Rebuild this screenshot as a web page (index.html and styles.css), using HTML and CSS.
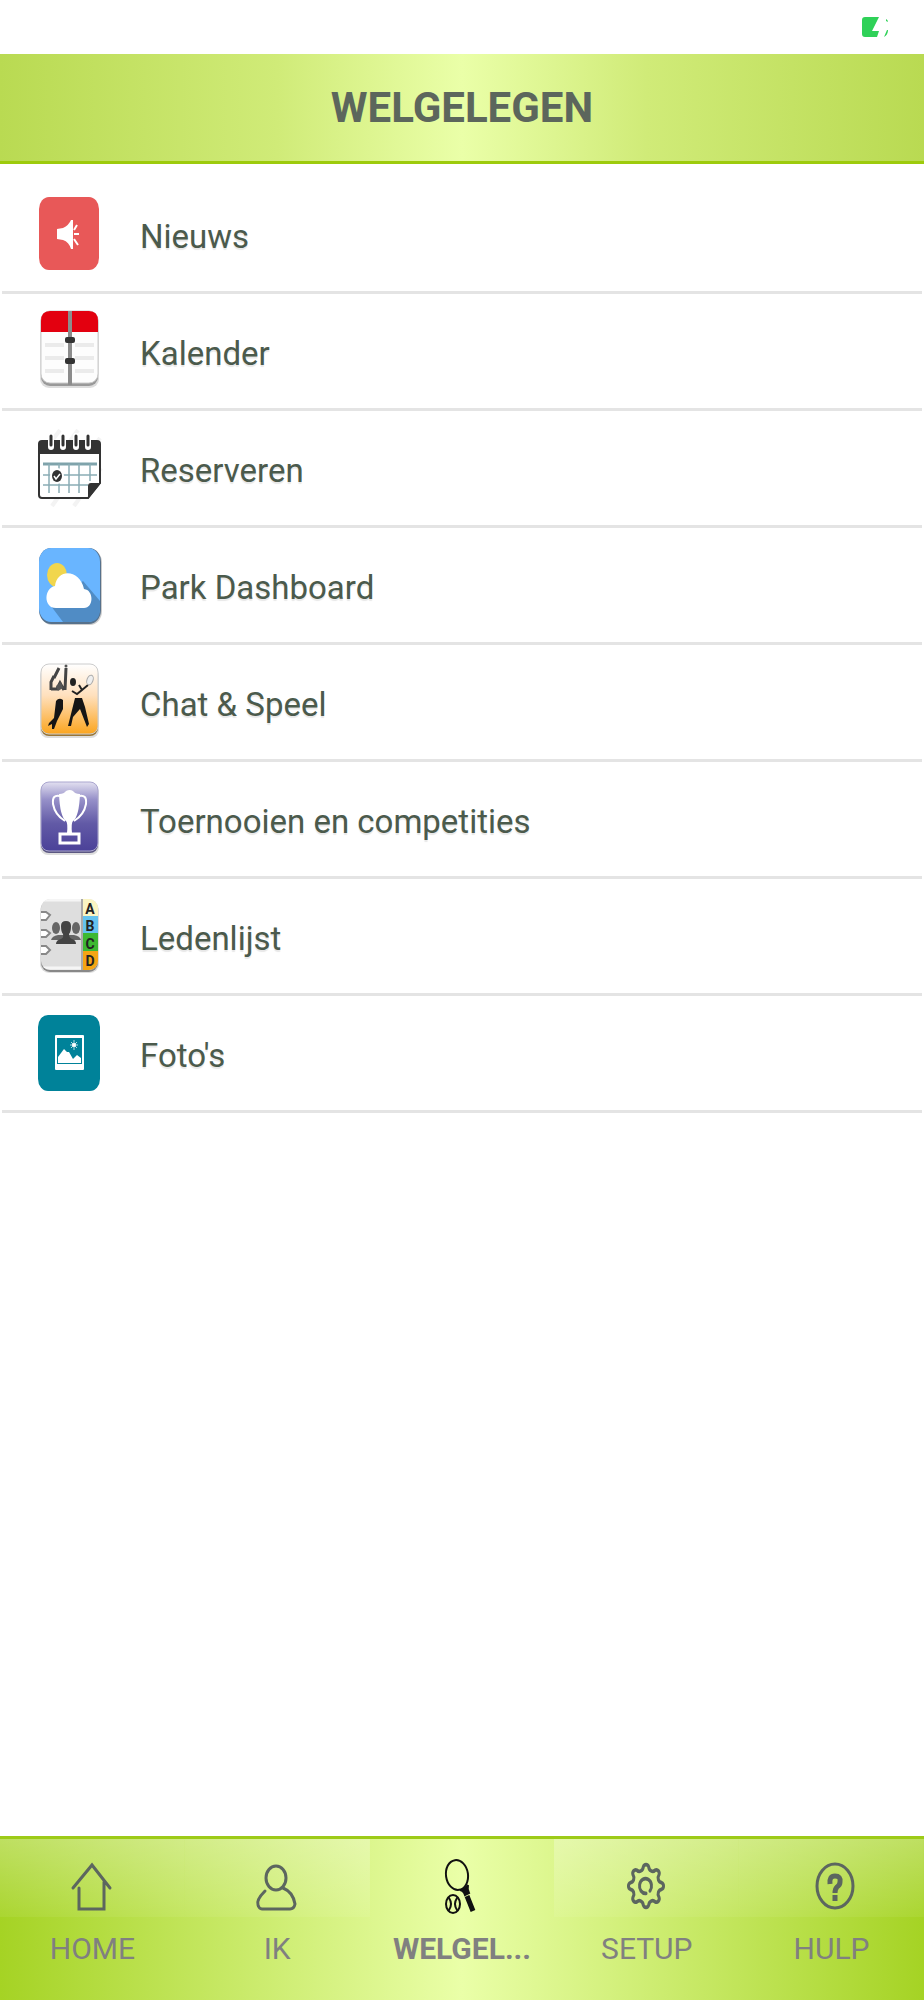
FILE: index.html
```html
<!DOCTYPE html>
<html lang="nl">
<head>
    <meta charset="UTF-8">
    <meta name="viewport" content="width=device-width, initial-scale=1.0">
    <title>Welgelegen</title>
    <link rel="stylesheet" href="styles.css">
</head>
<body>

<div class="status-bar">
    <svg class="battery" viewBox="0 0 28 22" role="img" aria-label="Batterij">
        <path d="M4 1H18L11 15H18L16 21H4Q1 21 1 18V4Q1 1 4 1Z" fill="#2fd158"/>
        <path d="M25 3Q27 4 27 6L25 5ZM26 14H27Q27 19 23 21Z" fill="#2fd158"/>
    </svg>
</div>

<header class="header">
    <h1>WELGELEGEN</h1>
</header>

<main>
    <ul class="menu">
        <li>
            <a href="#nieuws">
                <svg class="menu-icon" viewBox="0 0 72 88" aria-hidden="true">
                    <rect x="5" y="7" width="60" height="73" rx="10" ry="12" fill="#e85858"/>
                    <path d="M23 39L29 38Q35 35 37 30H39V59H37Q35 52 29 50L23 49Z" fill="#fff"/>
                    <path d="M40 40L43 35M40 44H45M40 49L44 55" stroke="#fff" stroke-width="2" fill="none"/>
                </svg>
                <span>Nieuws</span>
            </a>
        </li>
        <li>
            <a href="#kalender">
                <svg class="menu-icon" viewBox="0 0 72 88" aria-hidden="true">
                    <rect x="6" y="7" width="59" height="74" rx="9" fill="#ddd"/>
                    <rect x="7" y="5" width="57" height="74" rx="9" fill="#999"/>
                    <rect x="7" y="4" width="57" height="72" rx="9" fill="#fdfdfd" stroke="#ccc"/>
                    <path d="M7 25V14Q7 4 16 4H55Q64 4 64 14V25Z" fill="#e3000f"/>
                    <path d="M11 38H30M41 38H60M11 51H30M41 51H60M11 64H30M41 64H60" stroke="#ebebeb" stroke-width="4"/>
                    <rect x="34" y="4" width="4" height="74" fill="#8c8c8c"/>
                    <rect x="31" y="30" width="10" height="6" rx="2" fill="#333"/>
                    <rect x="31" y="51" width="10" height="6" rx="2" fill="#333"/>
                </svg>
                <span>Kalender</span>
            </a>
        </li>
        <li>
            <a href="#reserveren">
                <svg class="menu-icon" viewBox="0 0 72 88" aria-hidden="true">
                    <path d="M5 34L26 6M5 60L44 6M18 82L66 14M40 82L67 44" stroke="#f3f3f3" stroke-width="4"/>
                    <path d="M8 17H63Q66 17 66 20V59L54 74H8Q5 74 5 71V20Q5 17 8 17Z" fill="#fff" stroke="#333" stroke-width="2"/>
                    <path d="M5 30V20Q5 17 8 17H63Q66 17 66 20V30Z" fill="#333"/>
                    <path d="M17 12V23M29 12V23M42 12V23M54 12V23" stroke="#fff" stroke-width="6" stroke-linecap="round"/>
                    <path d="M17 12V21M29 12V21M42 12V21M54 12V21" stroke="#333" stroke-width="3" stroke-linecap="round"/>
                    <path d="M9 40H63" stroke="#7fa3ab" stroke-width="3"/>
                    <path d="M9 51H63M9 61H54M15 40V69M25 40V69M35 40V69M45 40V69M56 40V57" stroke="#8badb5" stroke-width="1.5" fill="none"/>
                    <ellipse cx="23" cy="52" rx="7" ry="8" fill="#fff"/>
                    <ellipse cx="23" cy="52" rx="5" ry="6" fill="#333"/>
                    <path d="M20 52L22 55L26 50" stroke="#fff" stroke-width="1.5" fill="none"/>
                    <path d="M54 75V62Q54 59 57 59H67Z" fill="#333"/>
                </svg>
                <span>Reserveren</span>
            </a>
        </li>
        <li>
            <a href="#park">
                <svg class="menu-icon" viewBox="0 0 72 88" aria-hidden="true">
                    <rect x="6" y="8" width="62" height="76" rx="12" ry="14" fill="#ccc"/>
                    <rect x="5" y="7" width="62" height="76" rx="12" ry="14" fill="#56718c"/>
                    <rect x="5" y="7" width="61" height="74" rx="12" ry="14" fill="#69b5ff"/>
                    <path d="M49 40L66 60V68Q66 81 54 81H29L17 65Z" fill="#508cc5"/>
                    <ellipse cx="23" cy="34" rx="10" ry="12" fill="#f1d64d"/>
                    <path d="M22 67C9 67 10 47 21 45C23 27 46 28 50 48C60 49 60 67 50 67Z" fill="#fff"/>
                </svg>
                <span>Park Dashboard</span>
            </a>
        </li>
        <li>
            <a href="#chat">
                <svg class="menu-icon" viewBox="0 0 72 88" aria-hidden="true">
                    <defs>
                        <linearGradient id="orange" x1="0" y1="0" x2="0" y2="1">
                            <stop offset="0" stop-color="#fff"/>
                            <stop offset=".45" stop-color="#ffe0bd"/>
                            <stop offset="1" stop-color="#fba51f"/>
                        </linearGradient>
                    </defs>
                    <rect x="6" y="10" width="59" height="70" rx="8" fill="#ddd"/>
                    <rect x="7" y="8" width="57" height="70" rx="8" fill="#997534"/>
                    <rect x="7" y="6" width="57" height="70" rx="8" fill="url(#orange)" stroke="#ccc"/>
                    <path d="M17 32L17 24L20 18M20 20L25 10M17 31H23L26 25L30 32M31 32L32 10" fill="none" stroke="#444" stroke-width="3"/>
                    <path d="M22 28L27 24L29 30L24 33Z" fill="#555"/>
                    <circle cx="32" cy="8" r="1.5" fill="#555"/>
                    <path d="M22 43Q25 39 29 42V51L25 59L23 63L20 71H18V66L14 68L15 65L20 60Z" fill="#151515"/>
                    <ellipse cx="39" cy="24" rx="3" ry="4" fill="#222"/>
                    <path d="M38 33L43 36L48 32L45 27M48 32L54 27" fill="none" stroke="#222" stroke-width="2"/>
                    <ellipse cx="56" cy="22" rx="3" ry="5" fill="#eee" stroke="#aaa" transform="rotate(20 56 22)"/>
                    <path d="M41 40H48L51 49L55 66L53 69L46 51L39 59L37 68H34L38 52Z" fill="#151515"/>
                </svg>
                <span>Chat &amp; Speel</span>
            </a>
        </li>
        <li>
            <a href="#toernooien">
                <svg class="menu-icon" viewBox="0 0 72 88" aria-hidden="true">
                    <defs>
                        <linearGradient id="purple" x1="0" y1="0" x2="0" y2="1">
                            <stop offset="0" stop-color="#e2e0f0"/>
                            <stop offset=".25" stop-color="#9791c9"/>
                            <stop offset=".6" stop-color="#625aa6"/>
                            <stop offset="1" stop-color="#4b4198"/>
                        </linearGradient>
                    </defs>
                    <rect x="6" y="10" width="59" height="70" rx="8" fill="#ddd"/>
                    <rect x="7" y="8" width="57" height="70" rx="8" fill="#5b5782"/>
                    <rect x="7" y="7" width="57" height="69" rx="8" fill="url(#purple)" stroke="#aaa6cf"/>
                    <path d="M26 21Q18 19 19 29Q21 40 31 46M45 21Q53 19 52 29Q50 40 40 46" fill="none" stroke="#fff" stroke-width="2"/>
                    <path d="M25 19Q30 19 32 16Q36 14 39 16Q41 19 46 19Q45 42 39 46Q37 48 38 58H33Q34 48 32 46Q26 42 25 19Z" fill="#fff"/>
                    <path d="M26 59H45V68H26Z" fill="none" stroke="#fff" stroke-width="3"/>
                </svg>
                <span>Toernooien en competities</span>
            </a>
        </li>
        <li>
            <a href="#ledenlijst">
                <svg class="menu-icon" viewBox="0 0 72 88" aria-hidden="true">
                    <defs>
                        <clipPath id="book"><rect x="7" y="7" width="57" height="71" rx="9"/></clipPath>
                    </defs>
                    <rect x="6" y="10" width="59" height="71" rx="9" fill="#ddd"/>
                    <rect x="7" y="8" width="57" height="72" rx="9" fill="#888"/>
                    <g clip-path="url(#book)">
                        <rect x="7" y="7" width="57" height="71" fill="#dedede"/>
                        <path d="M7 8H49M7 76H49" stroke="#f5f5f5" stroke-width="3"/>
                        <rect x="47" y="7" width="3" height="71" fill="#aaa"/>
                        <rect x="49" y="7" width="15" height="17" fill="#fbf5c3"/>
                        <rect x="49" y="24" width="15" height="17" fill="#64c3ef"/>
                        <rect x="49" y="41" width="15" height="18" fill="#3db832"/>
                        <rect x="49" y="59" width="15" height="19" fill="#f5a514"/>
                    </g>
                    <path d="M7 20H12L16 23L12 28H7M7 38H12L16 41L12 45H7M7 54H12L16 58L12 62H7" fill="#fff" stroke="#888" stroke-width="2"/>
                    <g fill="#666">
                        <ellipse cx="22" cy="36" rx="4" ry="6"/>
                        <ellipse cx="42" cy="36" rx="4" ry="6"/>
                        <path d="M17 48Q18 44 24 43L40 43Q46 44 47 48Z"/>
                    </g>
                    <path d="M27 34Q27 29 32 29Q37 29 37 34Q37 40 35 42Q35 46 38 47Q42 48 42 52H22Q22 48 27 47Q30 46 29 42Q27 40 27 34Z" fill="#444"/>
                    <g class="tab-letters">
                        <text x="56" y="22">A</text>
                        <text x="56" y="39">B</text>
                        <text x="56" y="57">C</text>
                        <text x="56" y="74">D</text>
                    </g>
                </svg>
                <span>Ledenlijst</span>
            </a>
        </li>
        <li>
            <a href="#fotos">
                <svg class="menu-icon" viewBox="0 0 72 88" aria-hidden="true">
                    <rect x="4" y="6" width="62" height="76" rx="10" ry="12" fill="#008299"/>
                    <path fill-rule="evenodd" d="M22 26H49Q50 26 50 27V60Q50 61 49 61H22Q21 61 21 60V27Q21 26 22 26ZM23 29V55H48V29Z" fill="#fff"/>
                    <path d="M24 54V48L30 40L33 43L35 43L39 50L43 46L47 49V54Z" fill="#fff"/>
                    <circle cx="40" cy="36" r="2" fill="#fff"/>
                    <path d="M40 31V41M36 36H44M37 33L43 39M43 33L37 39" stroke="#fff" stroke-width=".7"/>
                </svg>
                <span>Foto's</span>
            </a>
        </li>
    </ul>
</main>

<nav class="tabs">
    <a href="#home">
        <svg class="tab-icon" viewBox="0 0 56 64" aria-hidden="true">
            <path d="M9 33L28 10L46 33M15 33V54H40V27"/>
        </svg>
        <span>HOME</span>
    </a>
    <a href="#ik">
        <svg class="tab-icon" viewBox="0 0 56 64" aria-hidden="true">
            <ellipse cx="27" cy="23" rx="10" ry="12"/>
            <path d="M16 36Q7 45 9 50Q10 54 13 54H41Q45 54 46 49Q44 37 34 33"/>
        </svg>
        <span>IK</span>
    </a>
    <a href="#welgelegen" class="active" aria-current="page">
        <svg class="tab-icon" viewBox="0 0 56 64" aria-hidden="true">
            <ellipse cx="23" cy="20" rx="11" ry="15" transform="rotate(-8 23 20)" stroke-width="2"/>
            <path d="M26 35Q31 35 34 30Q33 34 35 38L31 40Q30 36 26 35Z" fill="#111"/>
            <path class="grip" d="M33 41L39 56"/>
            <ellipse cx="19" cy="49" rx="7" ry="9"/>
            <path d="M15 43Q19 49 15 55M23 43Q19 49 23 55"/>
        </svg>
        <span>WELGEL...</span>
    </a>
    <a href="#setup">
        <svg class="tab-icon" viewBox="0 0 56 64" aria-hidden="true">
            <g transform="translate(27 31) scale(1 1.22)">
                <path d="M15.56 -2.74A2.9 2.9 0 0 1 15.56 2.74A3.9 3.9 0 0 0 12.94 9.06A2.9 2.9 0 0 1 9.06 12.94A3.9 3.9 0 0 0 2.74 15.56A2.9 2.9 0 0 1 -2.74 15.56A3.9 3.9 0 0 0 -9.06 12.94A2.9 2.9 0 0 1 -12.94 9.06A3.9 3.9 0 0 0 -15.56 2.74A2.9 2.9 0 0 1 -15.56 -2.74A3.9 3.9 0 0 0 -12.94 -9.06A2.9 2.9 0 0 1 -9.06 -12.94A3.9 3.9 0 0 0 -2.74 -15.56A2.9 2.9 0 0 1 2.74 -15.56A3.9 3.9 0 0 0 9.06 -12.94A2.9 2.9 0 0 1 12.94 -9.06A3.9 3.9 0 0 0 15.56 -2.74Z"/>
                <path d="M0 6A6 6 0 1 1 4 4"/>
            </g>
        </svg>
        <span>SETUP</span>
    </a>
    <a href="#hulp">
        <svg class="tab-icon" viewBox="0 0 56 64" aria-hidden="true">
            <ellipse cx="31" cy="31" rx="18" ry="22"/>
            <path class="grip" d="M26 29Q25 21 31 21Q37 21 36 27Q36 30 33 32Q31 34 31 38M31 40V46"/>
        </svg>
        <span>HULP</span>
    </a>
</nav>

</body>
</html>
```
FILE: styles.css
```css
* {
    box-sizing: border-box;
}
body {
    font-family: Roboto, sans-serif;
    background-color: #fff;
    margin: 0;
    min-height: 100vh;
    display: flex;
    flex-direction: column;
}
a {
    color: inherit;
    text-decoration: none;
}
.status-bar {
    height: 54px;
    display: flex;
    justify-content: flex-end;
    align-items: center;
    padding-right: 35px;
}
.battery {
    width: 28px;
    height: 22px;
}
.header {
    height: 110px;
    display: flex;
    justify-content: center;
    align-items: center;
    background: linear-gradient(to right, #b9da52, #d0eb78 30%, #eaffa8 50%, #d0eb78 70%, #b9da52);
    border-bottom: 3px solid #9dcb0c;
}
h1 {
    margin: 0;
    font-size: 42px;
    line-height: 52px;
    color: #5c665c;
}
main {
    flex: 1;
    padding: 13px 2px;
}
.menu {
    list-style: none;
    margin: 0;
    padding: 0;
}
.menu li {
    border-bottom: 3px solid #e4e4e4;
}
.menu a {
    display: flex;
    align-items: center;
    gap: 34px;
    height: 114px;
    padding-left: 32px;
    font-size: 33px;
    line-height: 44px;
    color: #4b5a4c;
}
.menu span {
    padding-top: 6px;
    text-shadow: 0 2px 1px #e8e8e8;
}
.menu-icon {
    flex: none;
    width: 72px;
    height: 88px;
}
.tab-letters {
    font-size: 14px;
    font-weight: bold;
    text-anchor: middle;
    fill: #222;
}
.tabs {
    display: flex;
    height: 164px;
    border-top: 3px solid #9dcb18;
    background: linear-gradient(to right, #a5d324, #eaffa8 50%, #a5d324);
}
.tabs a {
    flex: 1;
    min-width: 0;
    display: flex;
    flex-direction: column;
    align-items: center;
    gap: 10px;
    padding-top: 16px;
    font-size: 30px;
    line-height: 40px;
    color: #808080;
    /* gloss over the top half of the tab */
    background: linear-gradient(rgba(255, 255, 255, 0.28), rgba(255, 255, 255, 0.06)) no-repeat top / 100% 78px;
}
.tabs .active {
    font-weight: bold;
    background: none;
}
.tab-icon {
    width: 56px;
    height: 64px;
    fill: none;
    stroke: #5c665f;
    stroke-width: 3;
    stroke-linecap: round;
}
.active .tab-icon {
    stroke: #111;
    stroke-width: 2;
}
.tab-icon .grip {
    stroke-width: 5;
    stroke-linecap: butt;
}
```
